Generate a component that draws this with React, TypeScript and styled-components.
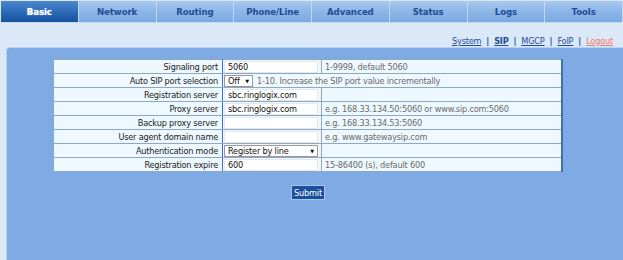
import React from 'react';
import styled, { createGlobalStyle } from 'styled-components';

const GlobalStyle = createGlobalStyle`
  html, body {
    margin: 0;
    padding: 0;
    background: #dbe8f8;
    font-family: 'DejaVu Sans', Verdana, sans-serif;
  }
`;

const tabs = ['Basic', 'Network', 'Routing', 'Phone/Line', 'Advanced', 'Status', 'Logs', 'Tools'];

type Row = {
  label: string;
  value?: string;
  kind: 'input' | 'select' | 'auth';
  hint?: string;
};

const rows: Row[] = [
  { label: 'Signaling port', value: '5060', kind: 'input', hint: '1-9999, default 5060' },
  { label: 'Auto SIP port selection', value: 'Off', kind: 'select', hint: '1-10. Increase the SIP port value incrementally' },
  { label: 'Registration server', value: 'sbc.ringlogix.com', kind: 'input', hint: '' },
  { label: 'Proxy server', value: 'sbc.ringlogix.com', kind: 'input', hint: 'e.g. 168.33.134.50:5060 or www.sip.com:5060' },
  { label: 'Backup proxy server', value: '', kind: 'input', hint: 'e.g. 168.33.134.53:5060' },
  { label: 'User agent domain name', value: '', kind: 'input', hint: 'e.g. www.gatewaysip.com' },
  { label: 'Authentication mode', value: 'Register by line', kind: 'auth', hint: '' },
  { label: 'Registration expire', value: '600', kind: 'input', hint: '15-86400 (s), default 600' },
];

const Page = styled.div`
  width: 623px;
  height: 260px;
  display: flex;
  flex-direction: column;
  overflow: hidden;
`;

const TabBar = styled.div`
  display: flex;
  height: 23px;
  padding: 1px 0 0 1px;
  box-sizing: border-box;
  border-bottom: 1px solid #c6daf2;
`;

const Tab = styled.div<{ $active?: boolean }>`
  flex: 1;
  display: flex;
  align-items: center;
  justify-content: center;
  font-size: 8.6px;
  font-weight: bold;
  letter-spacing: -0.1px;
  color: ${(p) => (p.$active ? '#ffffff' : '#1f4d95')};
  background: ${(p) =>
    p.$active
      ? 'linear-gradient(#4a88cf, #2766b4 60%, #15539f)'
      : 'linear-gradient(#a9c8ee, #8db6e8 50%, #7caae2)'};
  border-right: 1px solid #c3d8f3;
  text-shadow: ${(p) => (p.$active ? '0 0 1px #c8dcf4' : 'none')};
`;

const LinkBar = styled.div`
  display: flex;
  justify-content: flex-end;
  align-items: flex-end;
  gap: 5px;
  height: 24px;
  padding: 0 10px 1px 0;
  box-sizing: border-box;
  font-size: 8.2px;
  letter-spacing: -0.2px;
  line-height: 10px;
  color: #1f4d95;
`;

const NavLink = styled.a<{ $current?: boolean; $logout?: boolean }>`
  color: ${(p) => (p.$logout ? '#f07a6a' : '#1f4d95')};
  font-weight: ${(p) => (p.$current ? 'bold' : 'normal')};
  text-decoration: underline;
`;

const Sep = styled.span`
  font-weight: bold;
`;

const Panel = styled.div`
  flex: 1;
  margin-left: 6px;
  background: #7eabe3;
  border-top-left-radius: 4px;
  border-top: 1px solid #b9d1f0;
  border-left: 1px solid #b9d1f0;
  padding: 11px 0 0 46px;
`;

const Form = styled.div`
  width: 510px;
  display: flex;
  flex-direction: column;
  align-items: center;
`;

const Table = styled.table`
  width: 510px;
  border-collapse: collapse;
  border: 1px solid #3d72c2;
  border-right-width: 2px;
  background: #eef8ff;
  font-size: 8.2px;
  letter-spacing: -0.2px;
`;

const Tr = styled.tr`
  height: 14px;
`;

const Cell = styled.td`
  border: 1px solid #8fa6c4;
  padding: 0;
  height: 13px;
  line-height: 12px;
  white-space: nowrap;
`;

const LabelCell = styled(Cell)`
  width: 164px;
  text-align: right;
  padding-right: 4px;
  color: #222;
  border-right: 1px solid #3d72c2;
`;

const ValueCell = styled(Cell)`
  width: 97px;
  padding-left: 1px;
`;

const HintCell = styled(Cell)`
  color: #6b6b6b;
  padding-left: 3px;
`;

const TextBox = styled.div`
  width: 94px;
  height: 12px;
  background: #fff;
  border: 1px solid #e2e8ee;
  box-sizing: border-box;
  padding-left: 3px;
  color: #111;
  line-height: 11px;
`;

const SelectBox = styled.div<{ $w: number }>`
  display: inline-flex;
  align-items: center;
  justify-content: space-between;
  width: ${(p) => p.$w}px;
  height: 12px;
  background: #fff;
  border: 1px solid #9a9a9a;
  box-sizing: border-box;
  padding: 0 3px 0 3px;
  color: #111;
  vertical-align: middle;
`;

const Caret = styled.span`
  font-size: 5px;
`;

const InlineHint = styled.span`
  color: #6b6b6b;
  margin-left: 4px;
  vertical-align: middle;
`;

const SubmitButton = styled.button`
  margin-top: 13px;
  height: 15px;
  width: 34px;
  padding: 0;
  background: #1a4f9d;
  color: #fff;
  border: 1px solid #a9c6ec;
  font-family: 'DejaVu Sans', Verdana, sans-serif;
  font-size: 8.2px;
  letter-spacing: -0.2px;
  line-height: 12px;
`;

function FormRow({ row }: { row: Row }) {
  if (row.kind === 'select') {
    return (
      <Tr>
        <LabelCell>{row.label}</LabelCell>
        <ValueCell colSpan={2}>
          <SelectBox $w={29}>
            {row.value}
            <Caret>▼</Caret>
          </SelectBox>
          <InlineHint>{row.hint}</InlineHint>
        </ValueCell>
      </Tr>
    );
  }
  return (
    <Tr>
      <LabelCell>{row.label}</LabelCell>
      <ValueCell>
        {row.kind === 'auth' ? (
          <SelectBox $w={94}>
            {row.value}
            <Caret>▼</Caret>
          </SelectBox>
        ) : (
          <TextBox>{row.value}</TextBox>
        )}
      </ValueCell>
      <HintCell>{row.hint}</HintCell>
    </Tr>
  );
}

export default function App() {
  return (
    <Page>
      <GlobalStyle />
      <TabBar>
        {tabs.map((t, i) => (
          <Tab key={t} $active={i === 0}>
            {t}
          </Tab>
        ))}
      </TabBar>
      <LinkBar>
        <NavLink>System</NavLink>
        <Sep>|</Sep>
        <NavLink $current>SIP</NavLink>
        <Sep>|</Sep>
        <NavLink>MGCP</NavLink>
        <Sep>|</Sep>
        <NavLink>FoIP</NavLink>
        <Sep>|</Sep>
        <NavLink $logout>Logout</NavLink>
      </LinkBar>
      <Panel>
        <Form>
          <Table>
            <tbody>
              {rows.map((r) => (
                <FormRow key={r.label} row={r} />
              ))}
            </tbody>
          </Table>
          <SubmitButton>Submit</SubmitButton>
        </Form>
      </Panel>
    </Page>
  );
}
